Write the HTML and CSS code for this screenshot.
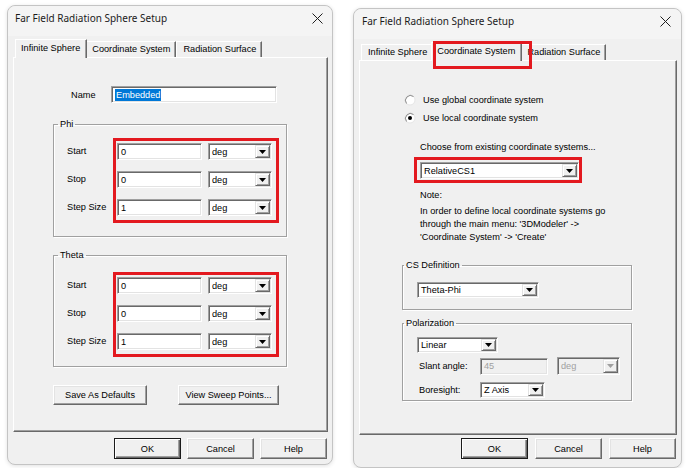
FILE: index.html
```html
<!DOCTYPE html>
<html>
<head>
    <title>Far Field Radiation Sphere Setup</title>
    <link rel="stylesheet" href="styles.css">
</head>
<body>
    <div class="screen">

        <!-- first dialog: Infinite Sphere tab -->
        <div class="dialog">
            <div class="titlebar">
                <span class="title">Far Field Radiation Sphere Setup</span>
                <svg class="close" width="11" height="11" viewBox="0 0 11 11"><path d="M0.5 0.5 L10.5 10.5 M10.5 0.5 L0.5 10.5" stroke="#1f1f1f" stroke-width="1"/></svg>
            </div>
            <div class="tabstrip">
                <div class="tab active first">Infinite Sphere</div>
                <div class="tab">Coordinate System</div>
                <div class="tab">Radiation Surface</div>
            </div>
            <div class="panel sphere-panel">
                <div class="name-row">
                    <span class="name-label">Name</span>
                    <div class="field name-field"><span class="selected">Embedded</span></div>
                </div>

                <fieldset class="group phi">
                    <legend>Phi</legend>
                    <div class="group-body">
                        <div class="labels">
                            <span>Start</span>
                            <span>Stop</span>
                            <span>Step Size</span>
                        </div>
                        <div class="mark rows">
                            <div class="row">
                                <div class="field num">0</div>
                                <div class="field select unit">deg<span class="drop"><svg width="7" height="4" viewBox="0 0 7 4"><path d="M0 0h7L3.5 4z" fill="#000"/></svg></span></div>
                            </div>
                            <div class="row">
                                <div class="field num">0</div>
                                <div class="field select unit">deg<span class="drop"><svg width="7" height="4" viewBox="0 0 7 4"><path d="M0 0h7L3.5 4z" fill="#000"/></svg></span></div>
                            </div>
                            <div class="row">
                                <div class="field num">1</div>
                                <div class="field select unit">deg<span class="drop"><svg width="7" height="4" viewBox="0 0 7 4"><path d="M0 0h7L3.5 4z" fill="#000"/></svg></span></div>
                            </div>
                        </div>
                    </div>
                </fieldset>

                <fieldset class="group theta">
                    <legend>Theta</legend>
                    <div class="group-body">
                        <div class="labels">
                            <span>Start</span>
                            <span>Stop</span>
                            <span>Step Size</span>
                        </div>
                        <div class="mark rows">
                            <div class="row">
                                <div class="field num">0</div>
                                <div class="field select unit">deg<span class="drop"><svg width="7" height="4" viewBox="0 0 7 4"><path d="M0 0h7L3.5 4z" fill="#000"/></svg></span></div>
                            </div>
                            <div class="row">
                                <div class="field num">0</div>
                                <div class="field select unit">deg<span class="drop"><svg width="7" height="4" viewBox="0 0 7 4"><path d="M0 0h7L3.5 4z" fill="#000"/></svg></span></div>
                            </div>
                            <div class="row">
                                <div class="field num">1</div>
                                <div class="field select unit">deg<span class="drop"><svg width="7" height="4" viewBox="0 0 7 4"><path d="M0 0h7L3.5 4z" fill="#000"/></svg></span></div>
                            </div>
                        </div>
                    </div>
                </fieldset>

                <div class="panel-buttons">
                    <button class="btn save-btn">Save As Defaults</button>
                    <button class="btn sweep-btn">View Sweep Points...</button>
                </div>
            </div>
            <div class="footer">
                <button class="btn default">OK</button>
                <button class="btn">Cancel</button>
                <button class="btn">Help</button>
            </div>
        </div>

        <!-- second dialog: Coordinate System tab -->
        <div class="dialog wide">
            <div class="titlebar">
                <span class="title">Far Field Radiation Sphere Setup</span>
                <svg class="close" width="11" height="11" viewBox="0 0 11 11"><path d="M0.5 0.5 L10.5 10.5 M10.5 0.5 L0.5 10.5" stroke="#1f1f1f" stroke-width="1"/></svg>
            </div>
            <div class="tabstrip">
                <div class="tab">Infinite Sphere</div>
                <div class="tab active marked">Coordinate System</div>
                <div class="tab">Radiation Surface</div>
            </div>
            <div class="panel cs-panel">
                <div class="radio-row">
                    <svg width="12" height="12" viewBox="0 0 12 12"><circle cx="6" cy="6" r="5" fill="#fff" stroke="#e6e6e6"/><path d="M2.5 9.5 A5 5 0 0 1 9.5 2.5" fill="none" stroke="#8a8a8a"/></svg>
                    <span>Use global coordinate system</span>
                </div>
                <div class="radio-row">
                    <svg width="12" height="12" viewBox="0 0 12 12"><circle cx="6" cy="6" r="5" fill="#fff" stroke="#e6e6e6"/><path d="M2.5 9.5 A5 5 0 0 1 9.5 2.5" fill="none" stroke="#8a8a8a"/><circle cx="6" cy="6" r="2" fill="#000"/></svg>
                    <span>Use local coordinate system</span>
                </div>

                <div class="choose">Choose from existing coordinate systems...</div>
                <div class="mark cs-mark">
                    <div class="field select cs-select">RelativeCS1<span class="drop"><svg width="7" height="4" viewBox="0 0 7 4"><path d="M0 0h7L3.5 4z" fill="#000"/></svg></span></div>
                </div>
                <div class="note">Note:</div>
                <div class="note-text">In order to define local coordinate systems go<br>through the main menu: '3DModeler' -&gt;<br>'Coordinate System' -&gt; 'Create'</div>

                <fieldset class="group csdef">
                    <legend>CS Definition</legend>
                    <div class="field select small theta-phi">Theta-Phi<span class="drop"><svg width="7" height="4" viewBox="0 0 7 4"><path d="M0 0h7L3.5 4z" fill="#000"/></svg></span></div>
                </fieldset>

                <fieldset class="group polar">
                    <legend>Polarization</legend>
                    <div class="field select small linear">Linear<span class="drop"><svg width="7" height="4" viewBox="0 0 7 4"><path d="M0 0h7L3.5 4z" fill="#000"/></svg></span></div>
                    <div class="pol-row slant-row">
                        <span class="pol-label">Slant angle:</span>
                        <div class="field disabled slant">45</div>
                        <div class="field select disabled slant-unit">deg<span class="drop"><svg width="7" height="4" viewBox="0 0 7 4"><path d="M0 0h7L3.5 4z" fill="#a0a0a0"/></svg></span></div>
                    </div>
                    <div class="pol-row bore-row">
                        <span class="pol-label">Boresight:</span>
                        <div class="field select small bore">Z Axis<span class="drop"><svg width="7" height="4" viewBox="0 0 7 4"><path d="M0 0h7L3.5 4z" fill="#000"/></svg></span></div>
                    </div>
                </fieldset>
            </div>
            <div class="footer">
                <button class="btn default">OK</button>
                <button class="btn">Cancel</button>
                <button class="btn">Help</button>
            </div>
        </div>

    </div>
</body>
</html>
```

FILE: styles.css
```css
html, body {
    margin: 0;
    padding: 0;
    background-color: #fff;
    font-family: "Liberation Sans", Arial, sans-serif;
    font-size: 9.2px;
    color: #000;
}

.screen {
    display: flex;
    align-items: flex-start;
    gap: 20px;
    padding: 5px 0 0 7px;
}

/* window frame */
.dialog {
    width: 326px;
    height: 460px;
    box-sizing: border-box;
    display: flex;
    flex-direction: column;
    padding: 0 4px 0 5px;
    background-color: #f0f0f0;
    border: 1px solid #c4c4c4;
    border-radius: 8px;
    box-shadow: 0 1px 4px rgba(0,0,0,0.12);
}

.dialog.wide {
    width: 329px;
    margin-top: 3px;
}

.titlebar {
    height: 30px;
    box-sizing: border-box;
    margin: 0 -4px 0 -5px;
    padding: 0 9px 6px 7px;
    display: flex;
    align-items: center;
    justify-content: space-between;
    background-color: #f4f4f4;
    border-radius: 8px 8px 0 0;
    font-family: "Noto Sans", "Liberation Sans", sans-serif;
    font-size: 10px;
    color: #1b1b1b;
}

.wide .titlebar {
    padding-left: 8px;
    padding-right: 10px;
}

/* tabs */
.tabstrip {
    height: 21px;
    display: flex;
    align-items: flex-end;
    padding-left: 2px;
    position: relative;
    z-index: 1;
}

.tab {
    height: 15px;
    line-height: 15px;
    padding: 0 5px 0 6px;
    border-top: 1px solid #fff;
    border-left: 1px solid #fff;
    border-right: 1px solid #696969;
    box-shadow: inset -1px 0 #a0a0a0;
    white-space: nowrap;
    background-color: #f0f0f0;
}

.tab.active {
    height: 18px;
    line-height: 16px;
    padding: 0 6px 0 5px;
    margin: 0 -2px -1px -2px;
    position: relative;
}

.tab.active.first {
    margin-left: 0;
}

.tab.marked::after {
    content: "";
    position: absolute;
    left: 1px;
    top: -2px;
    width: 99px;
    height: 28px;
    box-sizing: border-box;
    border: 3px solid #e3191f;
}

.panel {
    height: 375px;
    box-sizing: border-box;
    border: 1px solid;
    border-color: #fff #696969 #696969 #fff;
    box-shadow: inset -1px -1px #a0a0a0;
    display: flex;
    flex-direction: column;
    align-items: flex-start;
}

.sphere-panel {
    padding: 28px 0 0 39px;
}

.cs-panel {
    padding: 30px 0 0 0;
}

/* classic sunken field */
.field {
    height: 17px;
    box-sizing: border-box;
    display: flex;
    align-items: center;
    padding-left: 3px;
    background-color: #fff;
    border: 1px solid;
    border-color: #a0a0a0 #fff #fff #a0a0a0;
    box-shadow: inset 1px 1px #696969, inset -1px -1px #e3e3e3;
    white-space: nowrap;
}

.field.small {
    height: 16px;
}

.field.disabled {
    background-color: #f0f0f0;
    color: #a0a0a0;
}

.drop {
    margin: 1px 1px 1px auto;
    width: 15px;
    align-self: stretch;
    box-sizing: border-box;
    display: flex;
    align-items: center;
    justify-content: center;
    background-color: #f0f0f0;
    border: 1px solid;
    border-color: #e3e3e3 #696969 #696969 #e3e3e3;
    box-shadow: inset 1px 1px #fff, inset -1px -1px #a0a0a0;
}

.selected {
    background-color: #0078d7;
    color: #fff;
    padding: 1px 1px;
    margin-left: 0;
}

.mark {
    border: 3px solid #e3191f;
}

/* name row */
.name-row {
    display: flex;
    align-items: center;
    margin-left: 18px;
}

.name-label {
    width: 40px;
}

.name-field {
    width: 166px;
}

/* group boxes */
.group {
    margin: 0;
    min-width: 0;
    box-sizing: border-box;
    border: 1px solid #a0a0a0;
    box-shadow: 1px 1px 0 #fff, inset 1px 1px 0 #fff;
}

.group legend {
    padding: 0 2px;
    line-height: 12px;
}

.phi legend, .theta legend {
    margin-left: -9px;
}

.csdef legend, .polar legend {
    margin-left: -13px;
}

.phi, .theta {
    width: 234px;
    padding: 8px 0 13px 13px;
}

.phi {
    margin-top: 15px;
}

.theta {
    margin-top: 12px;
    padding-top: 11px;
    padding-bottom: 9px;
}

.group-body {
    display: flex;
}

.labels {
    width: 46px;
    display: flex;
    flex-direction: column;
    gap: 11px;
    padding-top: 5px;
}

.labels span {
    line-height: 17px;
}

.rows {
    display: flex;
    flex-direction: column;
    gap: 11px;
    padding: 2px 4px 4px 1px;
}

.row {
    display: flex;
    gap: 6px;
}

.num {
    width: 85px;
}

.unit {
    width: 64px;
}

.panel-buttons {
    display: flex;
    gap: 31px;
    margin-top: 18px;
}

/* buttons */
.btn {
    height: 21px;
    width: 67px;
    padding: 0;
    font-family: "Liberation Sans", Arial, sans-serif;
    font-size: 9.2px;
    color: #000;
    background-color: #f0f0f0;
    border: 1px solid;
    border-color: #fff #696969 #696969 #fff;
    box-shadow: inset -1px -1px #a0a0a0, inset 1px 1px #e3e3e3;
}

.btn.default {
    border-color: #1a1a1a;
    box-shadow: inset 1px 1px #fff, inset -1px -1px #696969, inset -2px -2px #a0a0a0;
}

.save-btn {
    width: 94px;
    height: 20px;
}

.sweep-btn {
    width: 101px;
    height: 20px;
}

.footer {
    display: flex;
    justify-content: flex-end;
    gap: 6px;
    padding: 6px 1px 0 0;
}

.wide .footer {
    gap: 7px;
    padding-top: 3px;
}

/* coordinate system tab */
.radio-row {
    height: 18px;
    display: flex;
    align-items: center;
    gap: 7px;
    margin-left: 44px;
}

.choose {
    margin: 14px 0 0 60px;
    line-height: 13px;
}

.cs-mark {
    margin: 3px 0 0 54px;
    padding: 2px 0 1px 3px;
}

.cs-select {
    width: 159px;
}

.note {
    margin: 6px 0 0 60px;
    line-height: 13px;
}

.note-text {
    margin: 3px 0 0 60px;
    line-height: 13px;
    white-space: nowrap;
}

.csdef, .polar {
    width: 230px;
    margin-left: 42px;
}

.csdef {
    margin-top: 15px;
    padding: 11px 0 11px 14px;
}

.theta-phi {
    width: 122px;
}

.polar {
    margin-top: 7px;
    padding: 8px 0 2px 14px;
}

.linear {
    width: 81px;
}

.pol-row {
    display: flex;
    align-items: center;
}

.slant-row {
    margin-top: 4px;
}

.bore-row {
    margin-top: 7px;
}

.pol-label {
    width: 61px;
    padding-left: 2px;
}

.slant {
    width: 68px;
}

.slant-unit {
    width: 63px;
    height: 18px;
    margin-left: 9px;
}

.bore {
    width: 65px;
}
```
